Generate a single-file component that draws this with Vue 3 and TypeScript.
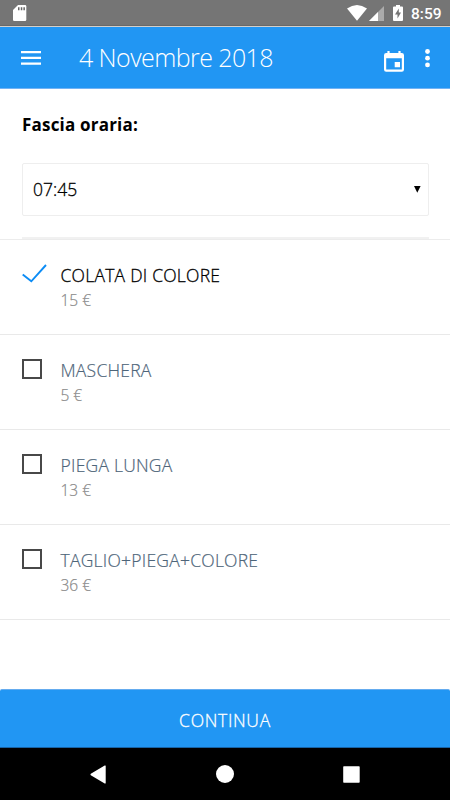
<script setup lang="ts">
import { ref } from 'vue'

interface Service {
  name: string
  price: number
  selected: boolean
}

const services = ref<Service[]>([
  { name: 'COLATA DI COLORE', price: 15, selected: true },
  { name: 'MASCHERA', price: 5, selected: false },
  { name: 'PIEGA LUNGA', price: 13, selected: false },
  { name: 'TAGLIO+PIEGA+COLORE', price: 36, selected: false },
])
</script>

<template>
  <div class="screen">
    <div class="status">
      <svg class="sd" width="14" height="17" viewBox="0 0 14 17"><path d="M5 0H12Q13.3 0 13.3 1.3V14.7Q13.3 16 12 16H1.3Q0 16 0 14.7V5Z" fill="#fff" /><path d="M5 2.2h1.500v3H5zM7.800 2.200h1.500v3H7.800zM10.400 2.200h1.500v3h-1.500z" fill="#666" /></svg>
      <svg class="wifi" width="20" height="16" viewBox="0 0 20 16"><path d="M0 3.500Q10-3.500 20 3.500L10 15.700Z" fill="#fff" /></svg>
      <svg class="signal" width="15" height="15" viewBox="0 0 15 15"><path d="M15 0V15H0Z" fill="#ababab" /><path d="M9 6V15H0Z" fill="#fff" /></svg>
      <svg class="battery" width="10" height="16" viewBox="0 0 10 16"><path d="M3 0h4v1.500h2q1 0 1 1V15q0 1-1 1H1q-1 0-1-1V2.500q0-1 1-1h2Z" fill="#fff" /><path d="M5.800 3.500 2 9.500h2.500v4L8 7.500H5.800Z" fill="#757575" /></svg>
      <span class="clock">8:59</span>
    </div>

    <header class="bar">
      <svg class="menu" width="21" height="14" viewBox="0 0 21 14"><path d="M0 0h20v2.200H0zM0 5.800h20V8H0zM0 11.600h20v2.200H0z" fill="#fff" /></svg>
      <h1>4 Novembre 2018</h1>
      <svg class="calendar" width="20" height="21" viewBox="0 0 20 21"><path fill-rule="evenodd" d="M3.400 0h2.200v2h8.800V0h2.200v2h1.200Q20 2 20 4.200v14.300q0 2.200-2.200 2.200H2.200Q0 20.700 0 18.500V4.200Q0 2 2.200 2h1.200ZM2.200 7.300v11.200h15.600V7.300ZM10.700 11h5.300v5.300h-5.300Z" fill="#fff" /></svg>
      <svg class="more" width="5" height="19" viewBox="0 0 5 19"><circle cx="2.500" cy="2.500" r="2.400" fill="#fff" /><circle cx="2.500" cy="9.200" r="2.400" fill="#fff" /><circle cx="2.500" cy="15.900" r="2.400" fill="#fff" /></svg>
    </header>

    <section class="slot">
      <h2>Fascia oraria:</h2>
      <div class="select">
        <span>07:45</span>
        <svg width="7" height="7" viewBox="0 0 7 7"><path d="M0 0h6.600L3.300 6.700Z" fill="#000" /></svg>
      </div>
      <div class="rule"></div>
    </section>

    <ul class="services">
      <li v-for="s in services" :key="s.name" :class="{ selected: s.selected }" @click="s.selected = !s.selected">
        <div class="mark">
          <svg v-if="s.selected" width="26" height="20" viewBox="0 0 26 20"><path d="M.7 10.500 9.300 17.300 24 1" fill="none" stroke="#0c8cf5" stroke-width="1.900" /></svg>
          <span v-else class="box"></span>
        </div>
        <div class="info">
          <div class="name">{{ s.name }}</div>
          <div class="price">{{ s.price }} €</div>
        </div>
      </li>
    </ul>

    <button class="continue">CONTINUA</button>

    <nav class="nav">
      <svg width="16" height="19" viewBox="0 0 16 19"><path d="M15.700.7v17.600Q15.300 18.800 14.700 18.400L.8 10.200Q0 9.500.8 8.800L14.700.6Q15.300.2 15.700.7Z" fill="#fff" /></svg>
      <svg width="18" height="18" viewBox="0 0 18 18"><circle cx="9" cy="9" r="9" fill="#fff" /></svg>
      <svg width="17" height="17" viewBox="0 0 17 17"><rect x=".2" y=".2" width="16.500" height="16.500" rx=".7" fill="#fff" /></svg>
    </nav>
  </div>
</template>

<style>
body { background: #fff; }
</style>

<style scoped>
.screen {
  display: flex;
  flex-direction: column;
  width: 450px;
  height: 800px;
  overflow: hidden;
  background: #fff;
  font-family: "Open Sans", sans-serif;
}
.status {
  display: flex;
  align-items: flex-start;
  box-sizing: border-box;
  height: 27px;
  padding: 5px 9px 0 13px;
  background: #757575;
  border-bottom: 1px solid #d3d0cc;
  box-shadow: inset 0 -1px #696969;
}
.wifi { margin-left: auto; }
.signal { margin: 1px 0 0 2px; }
.battery { margin-left: 9px; }
.clock {
  width: 30px;
  margin-left: 8px;
  color: #fff;
  font: 500 15.5px/18px Roboto, sans-serif;
  white-space: nowrap;
}
.bar {
  display: flex;
  align-items: center;
  box-sizing: border-box;
  height: 62px;
  padding: 0 20px 0 21px;
  background: #2196f3;
  border-bottom: 1px solid #72b3f5;
}
.menu { margin-top: 1px; }
h1 {
  margin: 0 0 1px 37px;
  color: #fff;
  font-size: 25px;
  font-weight: 300;
  letter-spacing: -0.58px;
  line-height: 34px;
  white-space: nowrap;
}
.calendar { margin: 7px 0 0 auto; }
.more { margin: 2px 0 0 21px; }
.slot {
  display: flex;
  flex-direction: column;
  box-sizing: border-box;
  height: 150px;
  padding: 24px 21px 0 22px;
}
h2 {
  margin: 0;
  color: #000;
  font-size: 17px;
  font-weight: 700;
  letter-spacing: 0.2px;
  line-height: 24px;
}
.select {
  display: flex;
  align-items: center;
  justify-content: space-between;
  box-sizing: border-box;
  height: 53px;
  margin-top: 26px;
  padding: 0 7px 0 10px;
  border: 1px solid #eee;
  border-radius: 2px;
  color: #000;
  font-size: 17.5px;
  font-weight: 300;
  -webkit-text-stroke: 0.3px #000;
}
.select span { padding-bottom: 2px; }
.rule {
  height: 2px;
  margin-top: 21px;
  background: #f1f1f1;
}
.services {
  flex: 1;
  margin: 0;
  padding: 0;
  border-top: 1px solid #ececec;
  list-style: none;
}
li {
  display: flex;
  box-sizing: border-box;
  height: 95.1px;
  padding: 23px 22px 0;
  border-bottom: 1px solid #e9e9e9;
}
.mark { width: 38.5px; }
.mark svg { display: block; margin-top: 1px; }
.box {
  display: block;
  box-sizing: border-box;
  width: 20px;
  height: 20px;
  margin-top: 1px;
  border: 2px solid #484848;
}
.name {
  color: #4e6579;
  font-size: 17.5px;
  font-weight: 300;
  letter-spacing: 0.24px;
  line-height: 24px;
  white-space: nowrap;
  -webkit-text-stroke: 0.2px currentColor;
}
.selected .name { color: #000; -webkit-text-stroke-width: 0.3px; }
.price {
  margin-top: 2px;
  color: #888;
  font-size: 15.5px;
  font-weight: 300;
  line-height: 22px;
  -webkit-text-stroke: 0.2px currentColor;
}
.continue {
  height: 59px;
  padding: 2px 0 0;
  border: 0;
  border-top: 1px solid #65acef;
  border-bottom: 1px solid #1763a6;
  border-radius: 2px 2px 0 0;
  background: #2196f3;
  color: #fff;
  font: 300 17.5px/24px "Open Sans", sans-serif;
  letter-spacing: 0.7px;
  -webkit-text-stroke: 0.3px #fff;
}
.nav {
  display: flex;
  align-items: center;
  justify-content: space-between;
  box-sizing: border-box;
  height: 52px;
  padding: 0 90px;
  background: #000;
}
</style>
